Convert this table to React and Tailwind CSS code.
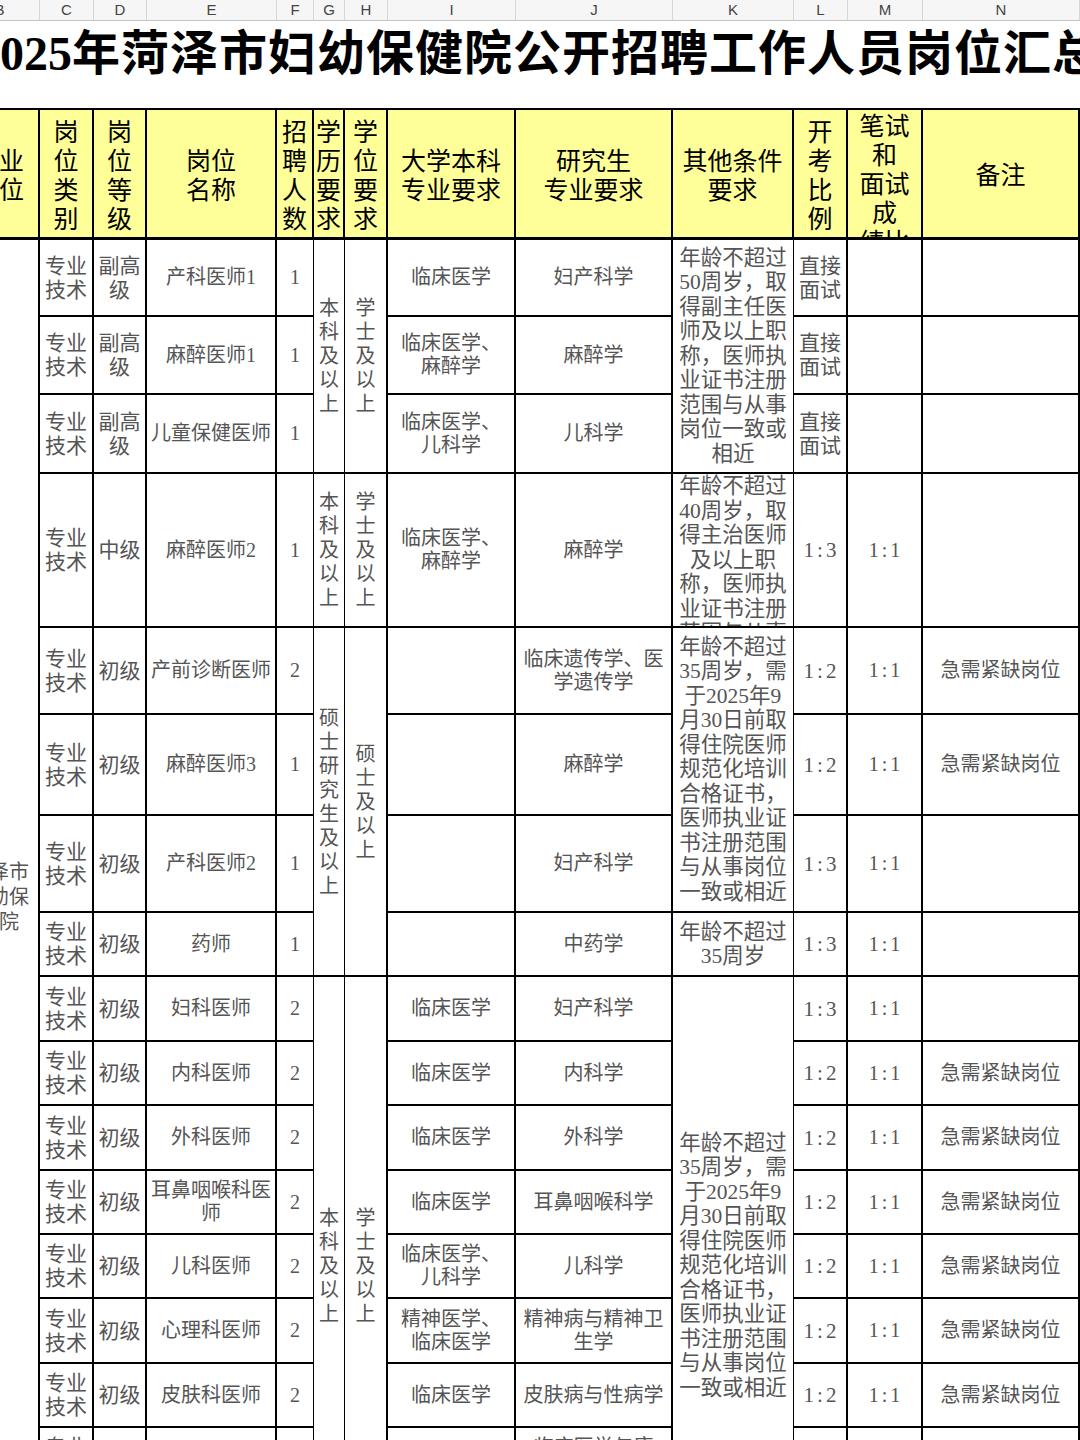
import clsx from 'clsx';

// Column letters shown in the sheet header strip (B is half hidden on the left).
const STRIP = [
  { k: 'B', w: 'w-[80px]' },
  { k: 'C', w: 'w-[54px]' },
  { k: 'D', w: 'w-[53px]' },
  { k: 'E', w: 'w-[130px]' },
  { k: 'F', w: 'w-[37px]' },
  { k: 'G', w: 'w-[31px]' },
  { k: 'H', w: 'w-[43px]' },
  { k: 'I', w: 'w-[128px]' },
  { k: 'J', w: 'w-[157px]' },
  { k: 'K', w: 'w-[121px]' },
  { k: 'L', w: 'w-[54px]' },
  { k: 'M', w: 'w-[75px]' },
  { k: 'N', w: 'w-[157px]' },
];

const SERIF = "font-['Liberation_Serif','Noto_Sans_CJK_SC',serif]";
const SANS = "font-['Noto_Sans_CJK_SC',sans-serif]";

const HEAD_BASE =
  'flex flex-col items-center text-center overflow-hidden whitespace-nowrap bg-[#ffff99] text-black text-[25px] leading-[29px] border-b-[3px] border-r-2 border-black';

const BODY_BASE =
  'flex flex-col items-center text-center overflow-hidden whitespace-nowrap border-b-2 border-black text-[#555]';

const BODY_COL = {
  B: 'border-r-2 text-[20px] leading-[25px] text-[#444]',
  C: 'border-r-2 text-[21px] leading-[24px]',
  D: 'border-r-2 text-[21px] leading-[24px]',
  E: 'border-r-2 text-[20px] leading-[23px]',
  F: 'border-r text-[20px] leading-[23px]',
  G: 'border-r text-[20px] leading-[24px]',
  H: 'border-r-2 text-[20px] leading-[24px]',
  I: 'border-r-2 text-[20px] leading-[23px]',
  J: 'border-r-2 text-[20px] leading-[23px]',
  K: 'border-r text-[21.5px] leading-[24.5px] text-[#333]',
  L: 'border-r-2 text-[21px] leading-[24px]',
  M: 'border-r-2 text-[20px] leading-[23px]',
  N: 'border-r-2 text-[20px] leading-[23px]',
};

const RATIO = 'tracking-[3px] pl-[3px]';

const R = (col, text, extra = {}) => ({
  col,
  lines: text === '' ? [] : text.split('/'),
  ...extra,
});
const V = (col, text, extra = {}) => ({ col, lines: text.split(''), ...extra });

const KA = '年龄不超过/50周岁，取/得副主任医/师及以上职/称，医师执/业证书注册/范围与从事/岗位一致或/相近';
const KB = '年龄不超过/40周岁，取/得主治医师/及以上职/称，医师执/业证书注册/范围与从事/岗位一致或/相近';
const KC = '年龄不超过/35周岁，需/于2025年9/月30日前取/得住院医师/规范化培训/合格证书，/医师执业证/书注册范围/与从事岗位/一致或相近';

const HEADER = [
  R('B', '事业/单位', { cls: 'justify-center' }),
  V('C', '岗位类别'),
  V('D', '岗位等级'),
  R('E', '岗位/名称'),
  V('F', '招聘人数'),
  V('G', '学历要求'),
  V('H', '学位要求'),
  R('I', '大学本科/专业要求'),
  R('J', '研究生/专业要求'),
  R('K', '其他条件/要求'),
  V('L', '开考比例'),
  R('M', '笔试/和/面试/成/绩比/例', { top: true }),
  R('N', '备注'),
];

// one ordinary "初级" line: columns C D E F I J L M N
const junior = (name, n, ben, yan, ratio, note) => [
  R('C', '专业/技术'),
  R('D', '初级'),
  R('E', name),
  R('F', n),
  R('I', ben),
  R('J', yan),
  R('L', ratio, { cls: RATIO }),
  R('M', '1:1', { cls: RATIO }),
  R('N', note),
];

const BODY = [
  // 1
  R('B', '菏泽市/妇幼保/健院', { span: 'row-span-17' }),
  R('C', '专业/技术'),
  R('D', '副高/级'),
  R('E', '产科医师1'),
  R('F', '1'),
  V('G', '本科及以上', { span: 'row-span-3', cls: 'leading-[23px]' }),
  V('H', '学士及以上', { span: 'row-span-3', cls: 'leading-[23px]' }),
  R('I', '临床医学'),
  R('J', '妇产科学'),
  R('K', KA, { span: 'row-span-3' }),
  R('L', '直接/面试'),
  R('M', ''),
  R('N', ''),
  // 2
  R('C', '专业/技术'),
  R('D', '副高/级'),
  R('E', '麻醉医师1'),
  R('F', '1'),
  R('I', '临床医学、/麻醉学'),
  R('J', '麻醉学'),
  R('L', '直接/面试'),
  R('M', ''),
  R('N', ''),
  // 3
  R('C', '专业/技术'),
  R('D', '副高/级'),
  R('E', '儿童保健医师'),
  R('F', '1'),
  R('I', '临床医学、/儿科学'),
  R('J', '儿科学'),
  R('L', '直接/面试'),
  R('M', ''),
  R('N', ''),
  // 4
  R('C', '专业/技术'),
  R('D', '中级'),
  R('E', '麻醉医师2'),
  R('F', '1'),
  V('G', '本科及以上', { cls: 'leading-[23px]' }),
  V('H', '学士及以上', { cls: 'leading-[23px]' }),
  R('I', '临床医学、/麻醉学'),
  R('J', '麻醉学'),
  R('K', KB, { top: true }),
  R('L', '1:3', { cls: RATIO }),
  R('M', '1:1', { cls: RATIO }),
  R('N', ''),
  // 5
  R('C', '专业/技术'),
  R('D', '初级'),
  R('E', '产前诊断医师'),
  R('F', '2'),
  V('G', '硕士研究生及以上', { span: 'row-span-4', cls: 'leading-[24.5px]' }),
  V('H', '硕士及以上', { span: 'row-span-4', cls: 'leading-[24.5px]' }),
  R('I', ''),
  R('J', '临床遗传学、医/学遗传学'),
  R('K', KC, { span: 'row-span-3' }),
  R('L', '1:2', { cls: RATIO }),
  R('M', '1:1', { cls: RATIO }),
  R('N', '急需紧缺岗位'),
  // 6, 7
  ...junior('麻醉医师3', '1', '', '麻醉学', '1:2', '急需紧缺岗位'),
  ...junior('产科医师2', '1', '', '妇产科学', '1:3', ''),
  // 8
  R('C', '专业/技术'),
  R('D', '初级'),
  R('E', '药师'),
  R('F', '1'),
  R('I', ''),
  R('J', '中药学'),
  R('K', '年龄不超过/35周岁'),
  R('L', '1:3', { cls: RATIO }),
  R('M', '1:1', { cls: RATIO }),
  R('N', ''),
  // 9
  R('C', '专业/技术'),
  R('D', '初级'),
  R('E', '妇科医师'),
  R('F', '2'),
  V('G', '本科及以上', { span: 'row-span-9', cls: 'leading-[24.5px]' }),
  V('H', '学士及以上', { span: 'row-span-9', cls: 'leading-[24.5px]' }),
  R('I', '临床医学'),
  R('J', '妇产科学'),
  R('K', KC, { span: 'row-span-9' }),
  R('L', '1:3', { cls: RATIO }),
  R('M', '1:1', { cls: RATIO }),
  R('N', ''),
  // 10 - 17
  ...junior('内科医师', '2', '临床医学', '内科学', '1:2', '急需紧缺岗位'),
  ...junior('外科医师', '2', '临床医学', '外科学', '1:2', '急需紧缺岗位'),
  ...junior('耳鼻咽喉科医/师', '2', '临床医学', '耳鼻咽喉科学', '1:2', '急需紧缺岗位'),
  ...junior('儿科医师', '2', '临床医学、/儿科学', '儿科学', '1:2', '急需紧缺岗位'),
  ...junior('心理科医师', '2', '精神医学、/临床医学', '精神病与精神卫/生学', '1:2', '急需紧缺岗位'),
  ...junior('皮肤科医师', '2', '临床医学', '皮肤病与性病学', '1:2', '急需紧缺岗位'),
  ...junior('康复科医师', '2', '临床医学', '临床医学与康/复医学', '1:2', '急需紧缺岗位'),
  ...junior('眼科医师', '1', '临床医学', '眼科学', '1:2', '急需紧缺岗位'),
];

function Cell({ cell, header }) {
  return (
    <div
      className={clsx(
        header ? HEAD_BASE : BODY_BASE,
        header ? SANS : BODY_COL[cell.col],
        cell.top ? 'justify-start' : 'justify-center',
        cell.span,
        cell.cls
      )}
    >
      {cell.lines.map((l, i) => (
        <div key={i}>{l}</div>
      ))}
    </div>
  );
}

export default function App() {
  return (
    <div className={clsx('w-[1080px] h-[1440px] overflow-hidden bg-white', SERIF)}>
      {/* sheet column letters */}
      <div className="flex ml-[-40px] w-[1120px] h-[21px] bg-[#f6f6f6] border-b border-[#c4c4c4]">
        {STRIP.map((c) => (
          <div
            key={c.k}
            className={clsx(
              c.w,
              "shrink-0 border-r border-[#d6d6d6] text-center text-[15px] leading-[19px] text-[#444] font-['Liberation_Sans',sans-serif]"
            )}
          >
            {c.k}
          </div>
        ))}
      </div>

      {/* title */}
      <div className="h-[55px] mt-[5px] ml-[-24px] whitespace-nowrap text-[48px] leading-[55px] font-bold text-black">
        <span>2025</span>
        <span className="tracking-[1px]">年菏泽市妇幼保健院公开招聘工作人员岗位汇总表</span>
      </div>
      <div className="h-[27px]" />

      {/* table */}
      <div className="grid ml-[-40px] w-[1120px] grid-cols-[80px_54px_53px_130px_37px_31px_43px_128px_157px_121px_54px_75px_157px] grid-rows-[130px_77px_78px_79px_154px_87px_101px_97px_64px_65px_64px_65px_64px_64px_65px_64px_64px_64px] border-t-2 border-black">
        {HEADER.map((c, i) => (
          <Cell key={'h' + i} cell={c} header />
        ))}
        {BODY.map((c, i) => (
          <Cell key={'b' + i} cell={c} />
        ))}
      </div>
    </div>
  );
}
